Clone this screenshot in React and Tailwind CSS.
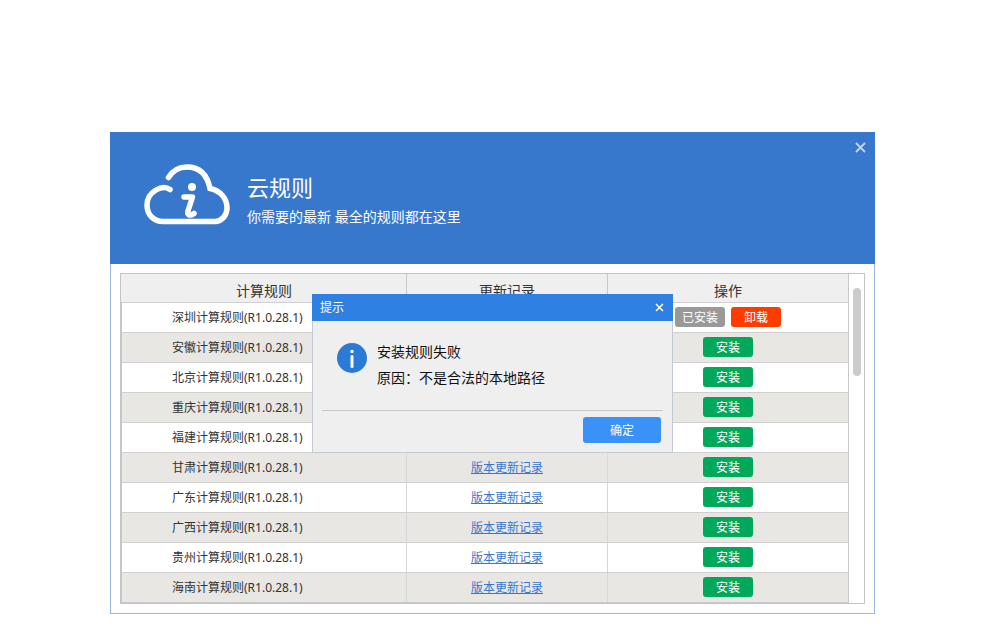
import React from 'react';

const font = "font-['Noto_Sans','Noto_Sans_CJK_SC',sans-serif]";

const provinces = ['深圳', '安徽', '北京', '重庆', '福建', '甘肃', '广东', '广西', '贵州', '海南'];

const CloudIcon = () => (
  <svg width="100" height="75" viewBox="0 0 100 75" fill="none" className="shrink-0 self-start mt-[23px]">
    <path
      d="M35 34.500C31 31.500 26 32 21 35C15 38.500 12 43 12 50C12 60 19 66.500 28 66.500H80C87 66.500 92 60 92 53C92 43 85 35.500 75 33.500C72 19 64 12 52 12C44 12 38 15 33.500 22.500"
      stroke="white"
      strokeWidth="5.500"
      strokeLinecap="round"
    />
    <circle cx="57" cy="32" r="4" fill="white" />
    <path d="M49 42H57.500L53 56C52 60 55 61.500 59 58.500" stroke="white" strokeWidth="5.500" strokeLinecap="round" strokeLinejoin="round" />
  </svg>
);

const Row = ({ name, index }) => {
  const even = index % 2 === 1;
  return (
    <div className={`grid grid-cols-[285px_201px_240px] h-[30px] border-t border-[#d0d0d0] text-[12px] ${even ? 'bg-[#e8e7e3]' : 'bg-white'}`}>
      <div className="flex items-center pl-[50px] border-r border-[#d8d8d8] text-[#333]">{name}计算规则(R1.0.28.1)</div>
      <div className="flex items-center justify-center border-r border-[#d8d8d8]">
        <a className="text-[#3778cd] underline">版本更新记录</a>
      </div>
      <div className="flex items-center justify-center gap-[6px] pb-[1px] text-white">
        {index === 0 ? (
          <>
            <span className="flex items-center justify-center w-[50px] h-[20px] pt-[1px] rounded-[3px] bg-[#999999]">已安装</span>
            <span className="flex items-center justify-center w-[50px] h-[20px] pt-[1px] rounded-[3px] bg-[#ff3c00]">卸载</span>
          </>
        ) : (
          <span className="flex items-center justify-center w-[50px] h-[20px] pt-[1px] rounded-[3px] bg-[#00a85a]">安装</span>
        )}
      </div>
    </div>
  );
};

export default function App() {
  return (
    <div className={`relative min-h-[640px] bg-white pt-[132px] pl-[110px] ${font}`}>
      <div className="w-[765px] h-[482px] border-x border-b border-[#9db8e0] bg-white">
        {/* header */}
        <div className="relative -mx-px flex h-[132px] items-center bg-[#3778cd] pl-[25px] text-white">
          <CloudIcon />
          <div className="ml-[12px] mt-[1px]">
            <div className="text-[22px] leading-[30px]">云规则</div>
            <div className="mt-[6px] text-[14px] leading-[18px]">你需要的最新 最全的规则都在这里</div>
          </div>
          <svg width="11" height="11" viewBox="0 0 11 11" className="absolute right-[9px] top-[9.500px]" stroke="#c4d6ef" strokeWidth="1.800">
            <path d="M1 1L10 10M10 1L1 10" />
          </svg>
        </div>

        {/* table */}
        <div className="mx-[9px] mt-[9px] h-[331px] border border-[#c4c4c4] flex overflow-hidden">
          <div className="w-[728px] shrink-0">
            <div className="grid grid-cols-[285px_201px_240px] h-[28px] pl-[1px] bg-[#efefef] text-[14px] text-[#333] border-r border-[#c8c8c8]">
              <div className="flex items-center justify-center pt-[4px] border-r border-[#c8c8c8]">计算规则</div>
              <div className="flex items-center justify-center pt-[4px] border-r border-[#c8c8c8]">更新记录</div>
              <div className="flex items-center justify-center pt-[4px]">操作</div>
            </div>
            <div className="border-l border-r border-b border-[#c8c8c8]">
              {provinces.map((p, i) => (
                <Row key={p} name={p} index={i} />
              ))}
            </div>
          </div>
          <div className="flex-1 pl-[4px] pt-[14px]">
            <div className="h-[88px] w-[8px] rounded-[4px] bg-[#cbcbcb]" />
          </div>
        </div>
      </div>

      {/* dialog */}
      <div className="absolute left-[312px] top-[294px] w-[361px] h-[159px] border border-[#c3cad6] border-t-0 bg-[#efefef]">
        <div className="-mx-px flex h-[27px] items-center justify-between bg-[#2e80e2] pl-[8px] pr-[9px] text-[12px] text-white">
          <span className="pt-[1px]">提示</span>
          <svg width="9" height="9" viewBox="0 0 9 9" stroke="white" strokeWidth="1.500">
            <path d="M1 1L8 8M8 1L1 8" />
          </svg>
        </div>
        <div className="flex pl-[24px] pt-[22px]">
          <svg width="30" height="30" viewBox="0 0 30 30" className="shrink-0">
            <circle cx="15" cy="15" r="15" fill="#2a7bd6" />
            <circle cx="15" cy="8.500" r="1.700" fill="white" />
            <rect x="13.500" y="12" width="3" height="13" rx="1.500" fill="white" />
          </svg>
          <div className="ml-[10px] text-[14px] leading-[26px] text-[#111] -mt-[4px]">
            <div>安装规则失败</div>
            <div>原因：不是合法的本地路径</div>
          </div>
        </div>
        <div className="mx-[9px] mt-[19px] border-t border-[#c8c8c8]" />
        <div className="flex justify-end pr-[11px] pt-[6px]">
          <span className="flex h-[26px] w-[78px] items-center justify-center rounded-[3px] bg-[#3a92f8] pt-[1px] text-[12px] text-white">确定</span>
        </div>
      </div>
    </div>
  );
}
